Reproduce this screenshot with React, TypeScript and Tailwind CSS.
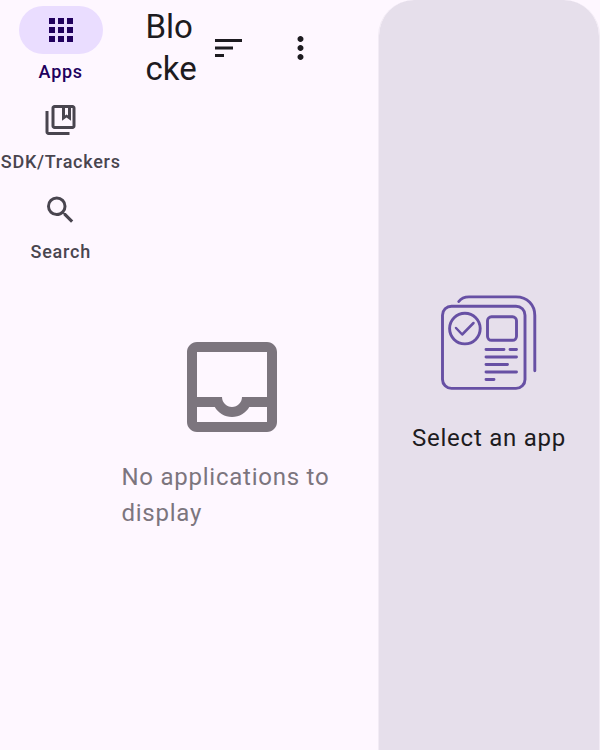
import type { ReactNode } from "react";

function Icon({ d, className, shift = 0 }: { d: string; className: string; shift?: number }) {
  return (
    <svg viewBox={`${-shift} 0 24 24`} fill="currentColor" className={`shrink-0 ${className}`}>
      <path d={d} />
    </svg>
  );
}

const icons = {
  apps: "M4 8h4V4H4v4zm6 12h4v-4h-4v4zm-6 0h4v-4H4v4zm0-6h4v-4H4v4zm6 0h4v-4h-4v4zm6-10v4h4V4h-4zm-6 4h4V4h-4v4zm6 6h4v-4h-4v4zm0 6h4v-4h-4v4z",
  bookmarks:
    "M4 6H2v14c0 1.100.9 2 2 2h14v-2H4V6zM20 2H8c-1.100 0-2 .9-2 2v12c0 1.100.9 2 2 2h12c1.100 0 2-.9 2-2V4c0-1.100-.9-2-2-2zm0 14H8V4h5v8.500l3-2.250 3 2.250V4h1v12zm-5-12h2v5l-1-.75-1 .75V4z",
  search:
    "M15.500 14h-.79l-.28-.27A6.471 6.471 0 0 0 16 9.500 6.500 6.500 0 1 0 9.500 16c1.610 0 3.090-.59 4.230-1.570l.27.28v.79l5 4.990L20.490 19l-4.990-5zm-6 0C7.010 14 5 11.990 5 9.500S7.010 5 9.500 5 14 7.010 14 9.500 11.990 14 9.500 14z",
  sort: "M3 18h6v-2H3v2zM3 6v2h18V6H3zm0 7h12v-2H3v2z",
  more: "M12 8c1.100 0 2-.9 2-2s-.9-2-2-2-2 .9-2 2 .9 2 2 2zm0 2c-1.100 0-2 .9-2 2s.9 2 2 2 2-.9 2-2-.9-2-2-2zm0 6c-1.100 0-2 .9-2 2s.9 2 2 2 2-.9 2-2-.9-2-2-2z",
  inbox:
    "M19 3H5c-1.100 0-2 .9-2 2v14c0 1.100.9 2 2 2h14c1.100 0 2-.9 2-2V5c0-1.100-.9-2-2-2zm0 16H5v-3h3.560c.69 1.190 1.970 2 3.450 2s2.750-.81 3.450-2H19v3zm0-5h-5c0 1.100-.9 2-2 2s-2-.9-2-2H5V5h14v9z",
};

function NavItem({ icon, children, active }: { icon: string; children: ReactNode; active?: boolean }) {
  return (
    <a
      className={`flex h-[90px] flex-col items-center pt-1.5 text-lg leading-6 font-medium tracking-[0.75px] whitespace-nowrap ${
        active ? "text-[#21005d]" : "text-[#49454f]"
      }`}
    >
      <span
        className={`flex h-12 w-[84px] items-center justify-center rounded-full ${active ? "bg-[#eaddff]" : ""}`}
      >
        <Icon d={icon} className="size-9" shift={active ? 0 : -0.33} />
      </span>
      <span className="mt-1.5">{children}</span>
    </a>
  );
}

function ComponentsDrawing() {
  return (
    <svg
      viewBox="0 0 96 96"
      fill="none"
      stroke="#6750a4"
      strokeWidth="2.900"
      strokeLinecap="round"
      strokeLinejoin="round"
      className="size-24"
    >
      <rect x="1.500" y="12.200" width="82.500" height="82.200" rx="9" />
      <path d="M17.800 7.500C20 4.500 23.500 2.900 28 2.900H75C86.500 2.900 93.800 11 93.800 21.500V76.800" />
      <circle cx="23.900" cy="34.600" r="15.300" />
      <path d="M15 34L21.200 40.500L32.500 29" strokeWidth="2.500" />
      <rect x="46.500" y="22.800" width="29" height="23.500" rx="4" />
      <path d="M45 55.500H63M69 55.500H75.500M45 63H75.500M45 70.500H66.500M45 78H75.500M45 85.500H53" />
    </svg>
  );
}

export default function App() {
  return (
    <div className="flex h-[750px] w-[600px] overflow-hidden bg-[#fef7ff] font-[Roboto,sans-serif]">
      <nav className="w-[121.5px] shrink-0">
        <NavItem icon={icons.apps} active>Apps</NavItem>
        <NavItem icon={icons.bookmarks}>SDK/Trackers</NavItem>
        <NavItem icon={icons.search}>Search</NavItem>
      </nav>
      <main className="flex w-[256.5px] shrink-0 flex-col">
        <header className="flex h-24 items-center pl-6 text-[#1d1b20]">
          <h1 className="w-[64.5px] text-[33px] leading-[42px]">
            Blo
            <br />
            cke
          </h1>
          <button className="flex w-9">
            <Icon d={icons.sort} className="size-9" shift={0.33} />
          </button>
          <button className="ml-9 flex w-9">
            <Icon d={icons.more} className="size-9" shift={0.33} />
          </button>
        </header>
        <section className="flex flex-col pt-[231px] text-[#7c757e]">
          <Icon d={icons.inbox} className="ml-[50.5px] size-[120px]" />
          <p className="mt-3 w-[221px] text-2xl leading-9 tracking-[0.75px]">No applications to display</p>
        </section>
      </main>
      <aside className="flex w-[222px] shrink-0 flex-col items-center rounded-t-[36px] border-x border-[#f2ebf5] bg-[#e6dfeb] bg-clip-padding pt-[294px]">
        <ComponentsDrawing />
        <p className="mt-[30px] text-2xl leading-9 tracking-[0.75px] text-[#1d1b20]">Select an app</p>
      </aside>
    </div>
  );
}
